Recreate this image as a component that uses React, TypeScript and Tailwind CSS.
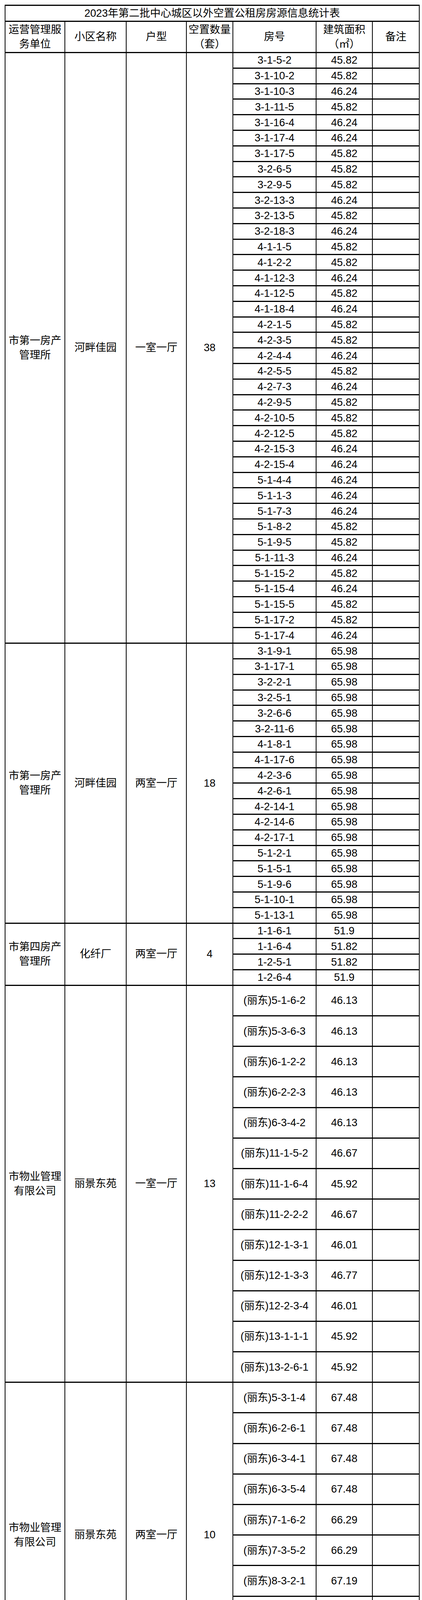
import React from "react";

type Row = [string, string];
type Section = {
  org: [string, string];
  name: string;
  type: string;
  count: number;
  h: string;
  rows: Row[];
};

const r = (list: string, area: string): Row[] => list.split(" ").map((n) => [n, area]);

const s1: Row[] = [
  ["3-1-5-2", "45.82"], ["3-1-10-2", "45.82"], ["3-1-10-3", "46.24"], ["3-1-11-5", "45.82"],
  ["3-1-16-4", "46.24"], ["3-1-17-4", "46.24"], ["3-1-17-5", "45.82"], ["3-2-6-5", "45.82"],
  ["3-2-9-5", "45.82"], ["3-2-13-3", "46.24"], ["3-2-13-5", "45.82"], ["3-2-18-3", "46.24"],
  ["4-1-1-5", "45.82"], ["4-1-2-2", "45.82"], ["4-1-12-3", "46.24"], ["4-1-12-5", "45.82"],
  ["4-1-18-4", "46.24"], ["4-2-1-5", "45.82"], ["4-2-3-5", "45.82"], ["4-2-4-4", "46.24"],
  ["4-2-5-5", "45.82"], ["4-2-7-3", "46.24"], ["4-2-9-5", "45.82"], ["4-2-10-5", "45.82"],
  ["4-2-12-5", "45.82"], ["4-2-15-3", "46.24"], ["4-2-15-4", "46.24"], ["5-1-4-4", "46.24"],
  ["5-1-1-3", "46.24"], ["5-1-7-3", "46.24"], ["5-1-8-2", "45.82"], ["5-1-9-5", "45.82"],
  ["5-1-11-3", "46.24"], ["5-1-15-2", "45.82"], ["5-1-15-4", "46.24"], ["5-1-15-5", "45.82"],
  ["5-1-17-2", "45.82"], ["5-1-17-4", "46.24"],
];

const s2 = r(
  "3-1-9-1 3-1-17-1 3-2-2-1 3-2-5-1 3-2-6-6 3-2-11-6 4-1-8-1 4-1-17-6 4-2-3-6 4-2-6-1 4-2-14-1 4-2-14-6 4-2-17-1 5-1-2-1 5-1-5-1 5-1-9-6 5-1-10-1 5-1-13-1",
  "65.98"
);

const s3: Row[] = [["1-1-6-1", "51.9"], ["1-1-6-4", "51.82"], ["1-2-5-1", "51.82"], ["1-2-6-4", "51.9"]];

const s4: Row[] = [
  ["(丽东)5-1-6-2", "46.13"], ["(丽东)5-3-6-3", "46.13"], ["(丽东)6-1-2-2", "46.13"],
  ["(丽东)6-2-2-3", "46.13"], ["(丽东)6-3-4-2", "46.13"], ["(丽东)11-1-5-2", "46.67"],
  ["(丽东)11-1-6-4", "45.92"], ["(丽东)11-2-2-2", "46.67"], ["(丽东)12-1-3-1", "46.01"],
  ["(丽东)12-1-3-3", "46.77"], ["(丽东)12-2-3-4", "46.01"], ["(丽东)13-1-1-1", "45.92"],
  ["(丽东)13-2-6-1", "45.92"],
];

const s5: Row[] = [
  ["(丽东)5-3-1-4", "67.48"], ["(丽东)6-2-6-1", "67.48"], ["(丽东)6-3-4-1", "67.48"],
  ["(丽东)6-3-5-4", "67.48"], ["(丽东)7-1-6-2", "66.29"], ["(丽东)7-3-5-2", "66.29"],
  ["(丽东)8-3-2-1", "67.19"], ["(丽东)8-3-6-1", "67.19"], ["(丽东)10-1-6-1", "67.19"],
  ["(丽东)10-3-6-2", "66.29"],
];

const s6: Row[] = (
  "1-1-3-01 1-1-3-26 1-1-4-03 1-1-4-14 1-1-5-01 1-1-5-02 1-1-5-12 1-1-5-13 1-1-5-15 1-1-5-16 1-1-5-19 " +
  "2-1-2-01 2-1-2-05 2-1-2-07 2-1-2-11 2-1-2-13 2-1-2-23 2-1-2-27 " +
  "2-1-3-01 2-1-3-06 2-1-3-16 2-1-3-17 2-1-3-20 2-1-3-22 " +
  "2-1-4-09 2-1-4-12 2-1-4-16 2-1-4-21 2-1-4-27 " +
  "2-1-5-01 2-1-5-02 2-1-5-03 2-1-5-05 2-1-5-07 2-1-5-08 2-1-5-09 2-1-5-10 2-1-5-11 2-1-5-12 2-1-5-14 2-1-5-15 2-1-5-16 2-1-5-20 2-1-5-22 2-1-5-26"
)
  .split(" ")
  .map((n) => ["公寓" + n, "32"] as Row);

const s7: Row[] = [
  ["(丽西)3-1-6-3", "45.16"], ["(丽西)3-2-5-1", "48.64"], ["(丽西)3-3-3-4", "48.71"],
  ["(丽西)3-3-5-1", "48.71"], ["(丽西)5-1-6-2", "44.88"], ["(丽西)5-3-1-1", "48.42"],
];

const s8: Row[] = [["(丽西)4-1-6-2", "69.22"]];

const SHORT = "h-[39.8px]";
const TALL = "h-[78.2px]";

const sections: Section[] = [
  { org: ["市第一房产", "管理所"], name: "河畔佳园", type: "一室一厅", count: 38, h: SHORT, rows: s1 },
  { org: ["市第一房产", "管理所"], name: "河畔佳园", type: "两室一厅", count: 18, h: SHORT, rows: s2 },
  { org: ["市第四房产", "管理所"], name: "化纤厂", type: "两室一厅", count: 4, h: SHORT, rows: s3 },
  { org: ["市物业管理", "有限公司"], name: "丽景东苑", type: "一室一厅", count: 13, h: TALL, rows: s4 },
  { org: ["市物业管理", "有限公司"], name: "丽景东苑", type: "两室一厅", count: 10, h: TALL, rows: s5 },
  { org: ["市物业管理", "有限公司"], name: "丽景东苑", type: "公寓", count: 45, h: SHORT, rows: s6 },
  { org: ["市物业管理", "有限公司"], name: "丽景西苑", type: "一室一厅", count: 6, h: TALL, rows: s7 },
  { org: ["市物业管理", "有限公司"], name: "丽景西苑", type: "两室一厅", count: 1, h: "h-[115px]", rows: s8 },
];

const cell = "border-x-2 border-y-[3px] border-black text-center align-middle p-0";

export default function App() {
  return (
    <div className="bg-white min-h-[6704px] pt-[12px] pl-[12px] text-black font-['Liberation_Sans','Noto_Sans_CJK_SC',sans-serif] text-[27px]">
      <table className="border-collapse table-fixed w-[1060px]">
        <colgroup>
          <col className="w-[153px]" />
          <col className="w-[157px]" />
          <col className="w-[154px]" />
          <col className="w-[119px]" />
          <col className="w-[213px]" />
          <col className="w-[144px]" />
          <col className="w-[120px]" />
        </colgroup>
        <tbody>
          <tr>
            <td colSpan={7} className={`${cell} h-[41px] leading-[36px]`}>
              2023年第二批中心城区以外空置公租房房源信息统计表
            </td>
          </tr>
          <tr>
            <td className={`${cell} h-[80px] leading-[37px]`}>
              运营管理服
              <br />
              务单位
            </td>
            <td className={cell}>小区名称</td>
            <td className={cell}>户型</td>
            <td className={`${cell} leading-[37px]`}>
              空置数量
              <br />
              （套）
            </td>
            <td className={cell}>房号</td>
            <td className={`${cell} leading-[37px]`}>
              建筑面积
              <br />
              （㎡）
            </td>
            <td className={cell}>备注</td>
          </tr>
          {sections.map((sec, si) =>
            sec.rows.map((row, ri) => (
              <tr key={`${si}-${ri}`}>
                {ri === 0 && (
                  <>
                    <td rowSpan={sec.rows.length} className={`${cell} leading-[37px]`}>
                      {sec.org[0]}
                      <br />
                      {sec.org[1]}
                    </td>
                    <td rowSpan={sec.rows.length} className={cell}>{sec.name}</td>
                    <td rowSpan={sec.rows.length} className={cell}>{sec.type}</td>
                    <td rowSpan={sec.rows.length} className={cell}>{sec.count}</td>
                  </>
                )}
                <td className={`${cell} ${sec.h} leading-[34px] whitespace-nowrap`}>{row[0]}</td>
                <td className={`${cell} leading-[34px]`}>{row[1]}</td>
                <td className={cell}></td>
              </tr>
            ))
          )}
        </tbody>
      </table>
    </div>
  );
}
